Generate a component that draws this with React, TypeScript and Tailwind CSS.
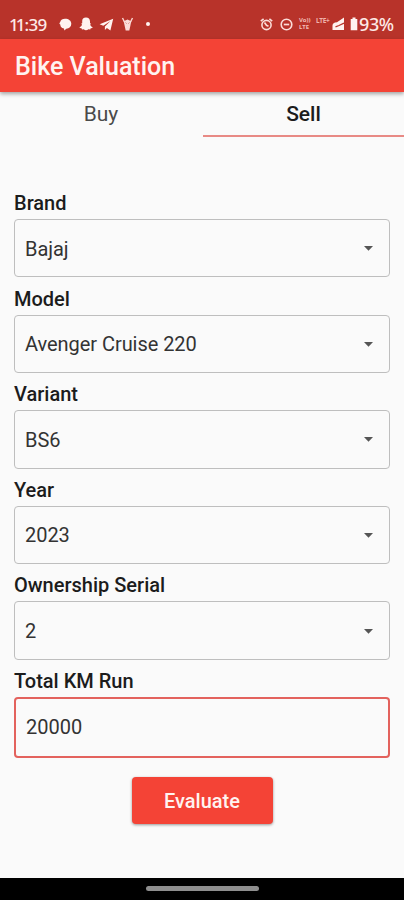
import { useState } from "react"

type SelectProps = {
    label: string
    value: string
}

const StatusBar = () => {
    return (
        <div className="flex h-[39px] shrink-0 items-center justify-between bg-[#b8332a] pt-[9px] pr-[9px] pl-[10px] font-['Noto_Sans'] text-[#fde9e6]">
            <div className="flex items-center">
                <span className="flex w-[37px] text-[17px] leading-none font-medium">
                    <span className="-ml-[1px] tracking-[-3px]">11</span>
                    <span className="ml-[2px] tracking-[-0.700px]">:39</span>
                </span>
                <svg className="ml-3 h-[13px] w-[13px]" viewBox="0 0 13 13" fill="#fff3f0">
                    <path d="M6 .8C9.800.8 12.300 2.800 12.300 5.800c0 2.800-2.100 4.700-5 5l-2 1.700-.3-2C2.300 10 1.200 8.400 1.400 6.800L.3 5.500 1.200 4C1.800 2 3.600.8 6 .8Z" />
                </svg>
                <svg className="ml-[7px] h-[14px] w-[14px]" viewBox="0 0 14 14" fill="#fff3f0">
                    <path d="M7 .6c2.500 0 4 1.600 4 3.900v1.700l1 .2-.8 1.300c.4 1.300 1.100 2 2.500 2.500-.2.8-1.200 1-2 1.100l-.5 1.200-1.700-.2C8.500 12.900 7.800 13.300 7 13.300s-1.500-.4-2.300-1l-1.700.2-.5-1.200c-.8-.1-1.800-.3-2-1.100 1.400-.5 2.100-1.200 2.500-2.500l-.8-1.300 1-.2V4.500C3 2.200 4.500.6 7 .6Z" />
                </svg>
                <svg className="ml-[6px] h-[13px] w-[15px]" viewBox="0 0 15 13" fill="#fff3f0">
                    <path d="M14.200.8.600 6.200l3.700 1.500 7.200-4.700-5.600 5.600v3.300l2-2 3.500 2.500L14.200.8Z" />
                </svg>
                <svg className="ml-[7px] h-[15px] w-[13px]" viewBox="0 0 13 15">
                    <path d="m1.500 1 2 4M11.500 1l-2 4" stroke="#fbd5d0" strokeWidth="1.400" />
                    <path d="m2.700 4.200 3.800-1.700 3.800 1.700L9.300 9l-1 4.500H4.700L3.700 9l-1-4.800Z" fill="#fbdcd8" />
                    <path d="M4.500 5.500 5.700 6.700M8.500 5.500 7.300 6.700" stroke="#dd8a83" />
                </svg>
                <span className="ml-[12px] h-1 w-1 rounded-full bg-[#fff3f0]"></span>
            </div>
            <div className="flex items-center">
                <svg className="h-[13px] w-[13px]" viewBox="0 0 13 13" fill="none" stroke="#fbdcd8" strokeWidth="1.600">
                    <circle cx="6.500" cy="7" r="4.600" />
                    <path d="M.8 3.200 3.600.9M12.200 3.200 9.400.9M4.500 4.500l2 2.800 2 .9" />
                </svg>
                <svg className="ml-[7px] h-[13px] w-[13px]" viewBox="0 0 13 13" fill="none" stroke="#fbdcd8" strokeWidth="1.600">
                    <circle cx="6.500" cy="6.500" r="5.300" />
                    <path d="M3.800 6.500h5.400" strokeWidth="1.700" />
                </svg>
                <span className="ml-[6px] flex w-[14px] flex-col text-[6px] leading-[7px] font-bold text-[#f3bdb7]">
                    <span className="h-[7px]">Vo))</span>
                    <span className="h-[7px]">LTE</span>
                </span>
                <span className="mb-[8px] ml-[3px] w-[14px] text-[6.500px] leading-[7px] font-bold tracking-[-0.300px] text-[#f0b2ab]">LTE+</span>
                <svg className="ml-[2px] h-[14px] w-[13px]" viewBox="0 0 13 14">
                    <path d="M12 .5V13H.5V8.500C.5 6.500 2 5.500 5 5.200L12 .5Z" fill="#fff3f0" />
                    <path d="M3.500 9.800 7 8.500 12 6.200" stroke="#b8332a" strokeWidth="1.300" fill="none" />
                </svg>
                <svg className="ml-[5px] h-[14px] w-[8px]" viewBox="0 0 8 14" fill="#fff3f0">
                    <path d="M2.500.5h3V2H7.300v11.200H.7V2h1.800V.5Z" />
                </svg>
                <span className="ml-[1px] w-[36px] text-[18px] leading-none font-medium tracking-[-0.400px]">93%</span>
            </div>
        </div>
    )
}

const SelectField = ({ label, value }: SelectProps) => {
    return (
        <div className="flex h-[95.600px] flex-col">
            <span className="mb-1 text-[20px] leading-6 font-medium">{label}</span>
            <button className="flex h-[58.400px] items-center justify-between rounded-[4px] border border-[#bebebe] pt-[1px] pr-[16px] pl-[10px] text-left">
                <span className="text-[20px] tracking-[-0.050px] text-[#333]">{value}</span>
                <svg className="h-[5px] w-[9px]" viewBox="0 0 9 5" fill="#555">
                    <path d="M0 0h9L4.500 4.700Z" />
                </svg>
            </button>
        </div>
    )
}

const fields: SelectProps[] = [
    { label: "Brand", value: "Bajaj" },
    { label: "Model", value: "Avenger Cruise 220" },
    { label: "Variant", value: "BS6" },
    { label: "Year", value: "2023" },
    { label: "Ownership Serial", value: "2" },
]

export default function App() {
    const [km, setKm] = useState("20000")
    const [tab, setTab] = useState("Sell")

    return (
        <div className="flex h-[900px] w-[404px] flex-col overflow-hidden bg-[#fafafa] font-[Roboto,sans-serif] text-[#1c1c1c]">
            <StatusBar />
            <header className="flex h-[53px] shrink-0 items-center bg-[#f44336] pt-[2px] pl-[15px] shadow-[0_2px_4px_rgba(0,0,0,0.35)]">
                <h1 className="text-[25px] font-medium text-[#fff3f0]">Bike Valuation</h1>
            </header>

            <div className="grid h-[45px] shrink-0 grid-cols-2 text-[21px] font-medium">
                {["Buy", "Sell"].map((name) => (
                    <button
                        key={name}
                        onClick={() => setTab(name)}
                        className={tab === name ? "ml-[1px] border-b-2 border-[#e88a85] pt-[2px] text-[#1c1c1c]" : "border-b-2 border-transparent pt-[2px] font-normal text-[#4a4a4a]"}
                    >{name}</button>
                ))}
            </div>

            <main className="flex grow flex-col px-[14px] pt-[54px]">
                {fields.map((field) => (
                    <SelectField key={field.label} label={field.label} value={field.value} />
                ))}
                <label htmlFor="km" className="mb-1 text-[20px] leading-6 font-medium">Total KM Run</label>
                <input
                    id="km"
                    type="text"
                    className="h-[61px] w-full rounded-[4px] border-2 border-[#e3625d] px-[10px] text-[20px] text-[#333] outline-none"
                    value={km}
                    onChange={(e) => setKm(e.target.value)}
                />
                <button className="mt-[19px] h-[47px] w-[141px] self-center rounded-[4px] bg-[#f44336] pt-[1px] text-[20px] font-medium text-[#fff3f0] shadow-[0_1px_3px_rgba(0,0,0,0.4)]">Evaluate</button>
            </main>

            <div className="flex h-[22px] shrink-0 justify-center bg-black pt-2">
                <div className="h-[5px] w-[113px] rounded-full bg-[#8e8e8e]"></div>
            </div>
        </div>
    )
}
